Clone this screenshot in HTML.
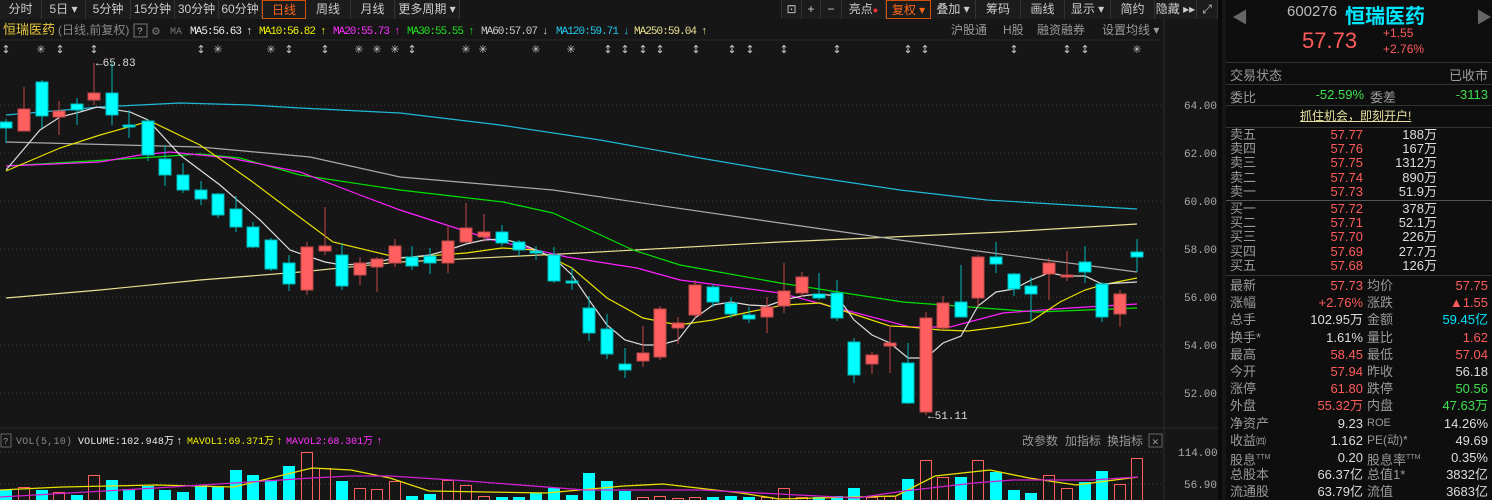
<!DOCTYPE html>
<html><head><meta charset="utf-8"><style>
*{margin:0;padding:0;box-sizing:border-box}
body{width:1492px;height:500px;background:#161616;overflow:hidden;position:relative;font-family:"Liberation Sans","Noto Sans CJK SC",sans-serif;font-size:12px;color:#bbb}
.a{position:absolute;white-space:nowrap}
.tab{position:absolute;top:0;height:19px;line-height:18px;text-align:center;color:#ccc;border-right:1px solid #333;background:#1c1c1c;font-size:12px}
.rp{position:absolute;left:1226px;top:0;width:266px;height:500px;background:#0e0e0e}
.r{position:absolute;font-size:13px;white-space:nowrap}
.red{color:#ff5b5b}.grn{color:#3fe04f}.cy{color:#00e5ff}.wh{color:#ddd}.gy{color:#9a9a9a}
</style></head><body>
<!-- top tabs -->
<div class="tab" style="left:0;width:42px">分时</div>
<div class="tab" style="left:42px;width:44px">5日 ▾</div>
<div class="tab" style="left:86px;width:45px">5分钟</div>
<div class="tab" style="left:131px;width:44px">15分钟</div>
<div class="tab" style="left:175px;width:44px">30分钟</div>
<div class="tab" style="left:219px;width:43px">60分钟</div>
<div class="tab" style="left:262px;width:44px;color:#ff6a1a;border:1px solid #d05010">日线</div>
<div class="tab" style="left:306px;width:45px">周线</div>
<div class="tab" style="left:351px;width:44px">月线</div>
<div class="tab" style="left:395px;width:65px">更多周期 ▾</div>
<div class="tab" style="left:781px;width:21px;border-left:1px solid #333">⊡</div>
<div class="tab" style="left:802px;width:19px">+</div>
<div class="tab" style="left:821px;width:21px">−</div>
<div class="tab" style="left:842px;width:44px">亮点<span style="color:#f33;font-size:9px">●</span></div>
<div class="tab" style="left:886px;width:45px;color:#ff6a1a;border:1px solid #d05010">复权 ▾</div>
<div class="tab" style="left:931px;width:45px">叠加 ▾</div>
<div class="tab" style="left:976px;width:45px">筹码</div>
<div class="tab" style="left:1021px;width:44px">画线</div>
<div class="tab" style="left:1065px;width:46px">显示 ▾</div>
<div class="tab" style="left:1111px;width:44px">简约</div>
<div class="tab" style="left:1155px;width:42px">隐藏 ▸▸</div>
<div class="tab" style="left:1197px;width:21px">⤢</div>

<svg class="a" style="left:0;top:0" width="1222" height="500" font-family="Liberation Mono, monospace">
<line x1="1164" y1="19" x2="1164" y2="500" stroke="#2c2c2c"/>
<line x1="0" y1="428" x2="1218" y2="428" stroke="#2c2c2c"/>
<rect x="1218" y="0" width="8" height="500" fill="#0a0a0a"/>
<!-- title row -->
<text x="3" y="34" fill="#e8c840" font-size="13" font-family="Liberation Sans, Noto Sans CJK SC, sans-serif">恒瑞医药</text>
<text x="58" y="34" fill="#888" font-size="12" font-family="Liberation Sans, Noto Sans CJK SC, sans-serif">(日线,前复权)</text>
<rect x="134" y="24" width="13" height="13" fill="none" stroke="#777"/><text x="137" y="34" fill="#aaa" font-size="10">?</text>
<text x="152" y="35" fill="#777" font-size="13">⚙</text>
<text x="170" y="34" fill="#777" font-size="10">MA</text>
<text x="190" y="34" fill="#eee" font-size="11" textLength="52">MA5:56.63</text><text x="246" y="34" fill="#eee" font-size="11">↑</text>
<text x="259" y="34" fill="#f0f000" font-size="11" textLength="57">MA10:56.82</text><text x="320" y="34" fill="#f0f000" font-size="11">↑</text>
<text x="333" y="34" fill="#ff30ff" font-size="11" textLength="57">MA20:55.73</text><text x="394" y="34" fill="#ff30ff" font-size="11">↑</text>
<text x="407" y="34" fill="#20e020" font-size="11" textLength="57">MA30:55.55</text><text x="468" y="34" fill="#20e020" font-size="11">↑</text>
<text x="481" y="34" fill="#ccc" font-size="11" textLength="57">MA60:57.07</text><text x="542" y="34" fill="#ccc" font-size="11">↓</text>
<text x="556" y="34" fill="#20c8f0" font-size="11" textLength="63">MA120:59.71</text><text x="623" y="34" fill="#20c8f0" font-size="11">↓</text>
<text x="634" y="34" fill="#e8e090" font-size="11" textLength="63">MA250:59.04</text><text x="701" y="34" fill="#e8e090" font-size="11">↑</text>
<g fill="#999" font-size="12" font-family="Liberation Sans, Noto Sans CJK SC, sans-serif">
<text x="951" y="34">沪股通</text><text x="1003" y="34">H股</text><text x="1037" y="34">融资融券</text><text x="1102" y="34">设置均线 ▾</text></g>
<line x1="0" y1="40" x2="1164" y2="40" stroke="#262626"/>
<!-- markers -->
<g fill="#ccc" font-size="11" font-family="DejaVu Sans, sans-serif" text-anchor="middle">
<text x="6" y="53">↕</text><text x="60" y="53">↕</text><text x="94" y="53">↕</text><text x="201" y="53">↕</text><text x="289" y="53">↕</text><text x="325" y="53">↕</text><text x="412" y="53">↕</text><text x="608" y="53">↕</text><text x="625" y="53">↕</text><text x="643" y="53">↕</text><text x="660" y="53">↕</text><text x="696" y="53">↕</text><text x="732" y="53">↕</text><text x="750" y="53">↕</text><text x="784" y="53">↕</text><text x="837" y="53">↕</text><text x="908" y="53">↕</text><text x="925" y="53">↕</text><text x="1014" y="53">↕</text><text x="1067" y="53">↕</text><text x="1085" y="53">↕</text>
<text x="41" y="53">✳</text><text x="218" y="53">✳</text><text x="271" y="53">✳</text><text x="359" y="53">✳</text><text x="377" y="53">✳</text><text x="395" y="53">✳</text><text x="466" y="53">✳</text><text x="483" y="53">✳</text><text x="536" y="53">✳</text><text x="571" y="53">✳</text><text x="1137" y="53">✳</text>
</g>
<!-- grid -->
<g stroke="#3a3a3a" stroke-dasharray="1,3">
<line x1="0" y1="105" x2="1164" y2="105"/><line x1="0" y1="153" x2="1164" y2="153"/><line x1="0" y1="201" x2="1164" y2="201"/><line x1="0" y1="249" x2="1164" y2="249"/><line x1="0" y1="297" x2="1164" y2="297"/><line x1="0" y1="345" x2="1164" y2="345"/><line x1="0" y1="393" x2="1164" y2="393"/>
<line x1="0" y1="452" x2="1164" y2="452"/><line x1="0" y1="484" x2="1164" y2="484"/></g>
<g fill="#aaa" font-size="11">
<text x="1184" y="109">64.00</text><text x="1184" y="157">62.00</text><text x="1184" y="205">60.00</text><text x="1184" y="253">58.00</text><text x="1184" y="301">56.00</text><text x="1184" y="349">54.00</text><text x="1184" y="397">52.00</text>
<text x="1178" y="456">114.00</text><text x="1184" y="488">56.90</text></g>
<!-- MA lines -->
<g fill="none" stroke-width="1.2">
<polyline stroke="#e8e090" points="6,298 100,290 200,280 300,272 400,262 580,253 780,242 870,238 1003,232 1137,224"/>
<polyline stroke="#20b8d8" points="6,115 100,107 180,103 250,105 300,108 400,113 500,125 600,140 700,158 800,175 900,190 987,200 1137,209"/>
<polyline stroke="#aaa" points="6,142 200,147 310,157 400,177 553,190 780,223 970,250 1137,272"/>
<polyline stroke="#00e000" points="6,166 140,158 200,154 240,158 300,175 400,190 503,202 553,213 633,250 680,265 780,283 903,302 970,307 1037,312 1137,308"/>
<polyline stroke="#ff20ff" points="6,166 100,162 140,155 170,152 230,158 300,172 360,195 400,210 493,240 567,257 637,268 680,280 780,293 910,327 950,327 1003,313 1070,308 1137,304"/>
<polyline stroke="#e8e000" points="6,171 60,148 100,135 150,121 200,145 250,180 290,210 333,242 400,258 466,253 502,248 536,250 572,268 607,298 643,318 678,325 713,320 749,312 784,305 820,303 850,313 890,326 910,327 940,330 968,331 1000,327 1030,322 1060,302 1085,290 1102,285 1137,278"/>
<polyline stroke="#ddd" points="6,170 40,130 60,117 80,112 97,107 130,112 148,120 180,155 220,185 260,220 290,250 307,256 325,262 342,265 360,264 378,262 395,258 412,257 430,255 448,250 466,244 484,240 502,239 519,243 536,250 554,258 572,275 589,300 607,325 625,340 643,345 660,345 678,340 695,318 713,305 731,302 749,305 767,306 784,300 802,296 819,294 837,296 854,320 872,335 890,343 908,358 926,358 943,343 961,336 978,306 996,292 1014,289 1031,280 1049,273 1067,276 1085,276 1102,284 1120,283 1137,282"/>
</g>
<!-- candles -->
<g id="c">
<g stroke="#00b8b8" fill="#00ffff">
<line x1="6" y1="119" x2="6" y2="143"/><rect x="0" y="122" width="12" height="6"/>
<line x1="42" y1="80" x2="42" y2="128"/><rect x="36" y="82" width="12" height="34"/>
<line x1="77" y1="98" x2="77" y2="125"/><rect x="71" y="104" width="12" height="6"/>
<line x1="112" y1="63" x2="112" y2="125"/><rect x="106" y="93" width="12" height="22"/>
<line x1="129" y1="110" x2="129" y2="138"/><rect x="123" y="125" width="12" height="2"/>
<line x1="148" y1="119" x2="148" y2="161"/><rect x="142" y="121" width="12" height="34"/>
<line x1="165" y1="145" x2="165" y2="186"/><rect x="159" y="159" width="12" height="16"/>
<line x1="183" y1="163" x2="183" y2="193"/><rect x="177" y="175" width="12" height="15"/>
<line x1="201" y1="181" x2="201" y2="205"/><rect x="195" y="190" width="12" height="9"/>
<line x1="218" y1="193" x2="218" y2="218"/><rect x="212" y="194" width="12" height="21"/>
<line x1="236" y1="196" x2="236" y2="232"/><rect x="230" y="209" width="12" height="18"/>
<line x1="253" y1="222" x2="253" y2="248"/><rect x="247" y="227" width="12" height="20"/>
<line x1="271" y1="238" x2="271" y2="271"/><rect x="265" y="240" width="12" height="29"/>
<line x1="289" y1="255" x2="289" y2="291"/><rect x="283" y="263" width="12" height="21"/>
<line x1="342" y1="243" x2="342" y2="290"/><rect x="336" y="255" width="12" height="31"/>
<line x1="412" y1="246" x2="412" y2="270"/><rect x="406" y="257" width="12" height="9"/>
<line x1="430" y1="248" x2="430" y2="274"/><rect x="424" y="256" width="12" height="7"/>
<line x1="502" y1="225" x2="502" y2="246"/><rect x="496" y="232" width="12" height="11"/>
<line x1="519" y1="240" x2="519" y2="256"/><rect x="513" y="242" width="12" height="8"/>
<line x1="536" y1="246" x2="536" y2="260"/><rect x="530" y="251" width="12" height="2"/>
<line x1="554" y1="247" x2="554" y2="283"/><rect x="548" y="255" width="12" height="26"/>
<line x1="572" y1="268" x2="572" y2="290"/><rect x="566" y="281" width="12" height="2"/>
<line x1="589" y1="296" x2="589" y2="341"/><rect x="583" y="308" width="12" height="25"/>
<line x1="607" y1="314" x2="607" y2="359"/><rect x="601" y="329" width="12" height="25"/>
<line x1="625" y1="348" x2="625" y2="378"/><rect x="619" y="364" width="12" height="6"/>
<line x1="713" y1="284" x2="713" y2="307"/><rect x="707" y="287" width="12" height="15"/>
<line x1="731" y1="297" x2="731" y2="318"/><rect x="725" y="303" width="12" height="11"/>
<line x1="749" y1="307" x2="749" y2="323"/><rect x="743" y="315" width="12" height="4"/>
<line x1="819" y1="273" x2="819" y2="300"/><rect x="813" y="294" width="12" height="4"/>
<line x1="837" y1="280" x2="837" y2="321"/><rect x="831" y="293" width="12" height="25"/>
<line x1="854" y1="338" x2="854" y2="383"/><rect x="848" y="342" width="12" height="33"/>
<line x1="908" y1="343" x2="908" y2="404"/><rect x="902" y="363" width="12" height="40"/>
<line x1="961" y1="265" x2="961" y2="317"/><rect x="955" y="302" width="12" height="15"/>
<line x1="996" y1="242" x2="996" y2="273"/><rect x="990" y="257" width="12" height="7"/>
<line x1="1014" y1="273" x2="1014" y2="296"/><rect x="1008" y="274" width="12" height="15"/>
<line x1="1031" y1="277" x2="1031" y2="322"/><rect x="1025" y="286" width="12" height="8"/>
<line x1="1085" y1="246" x2="1085" y2="283"/><rect x="1079" y="262" width="12" height="10"/>
<line x1="1102" y1="282" x2="1102" y2="322"/><rect x="1096" y="284" width="12" height="33"/>
<line x1="1137" y1="239" x2="1137" y2="272"/><rect x="1131" y="252" width="12" height="5"/>
</g>
<g stroke="#c04848" fill="#ff5f5f">
<line x1="24" y1="87" x2="24" y2="131"/><rect x="18" y="109" width="12" height="22"/>
<line x1="59" y1="101" x2="59" y2="135"/><rect x="53" y="111" width="12" height="6"/>
<line x1="94" y1="63" x2="94" y2="105"/><rect x="88" y="93" width="12" height="7"/>
<line x1="307" y1="242" x2="307" y2="295"/><rect x="301" y="247" width="12" height="43"/>
<line x1="325" y1="207" x2="325" y2="255"/><rect x="319" y="246" width="12" height="5"/>
<line x1="360" y1="257" x2="360" y2="285"/><rect x="354" y="263" width="12" height="12"/>
<line x1="377" y1="257" x2="377" y2="292"/><rect x="371" y="259" width="12" height="8"/>
<line x1="395" y1="239" x2="395" y2="267"/><rect x="389" y="246" width="12" height="17"/>
<line x1="448" y1="225" x2="448" y2="273"/><rect x="442" y="241" width="12" height="22"/>
<line x1="466" y1="203" x2="466" y2="243"/><rect x="460" y="228" width="12" height="14"/>
<line x1="484" y1="214" x2="484" y2="242"/><rect x="478" y="232" width="12" height="5"/>
<line x1="643" y1="326" x2="643" y2="367"/><rect x="637" y="353" width="12" height="8"/>
<line x1="660" y1="306" x2="660" y2="360"/><rect x="654" y="309" width="12" height="48"/>
<line x1="678" y1="317" x2="678" y2="344"/><rect x="672" y="323" width="12" height="5"/>
<line x1="695" y1="280" x2="695" y2="318"/><rect x="689" y="285" width="12" height="30"/>
<line x1="767" y1="297" x2="767" y2="333"/><rect x="761" y="307" width="12" height="10"/>
<line x1="784" y1="263" x2="784" y2="313"/><rect x="778" y="291" width="12" height="15"/>
<line x1="802" y1="272" x2="802" y2="297"/><rect x="796" y="277" width="12" height="16"/>
<line x1="872" y1="352" x2="872" y2="374"/><rect x="866" y="355" width="12" height="9"/>
<line x1="890" y1="325" x2="890" y2="373"/><rect x="884" y="343" width="12" height="3"/>
<line x1="926" y1="312" x2="926" y2="415"/><rect x="920" y="318" width="12" height="94"/>
<line x1="943" y1="296" x2="943" y2="330"/><rect x="937" y="303" width="12" height="25"/>
<line x1="978" y1="255" x2="978" y2="307"/><rect x="972" y="257" width="12" height="41"/>
<line x1="1049" y1="258" x2="1049" y2="300"/><rect x="1043" y="263" width="12" height="11"/>
<line x1="1067" y1="251" x2="1067" y2="281"/><rect x="1061" y="275" width="12" height="2"/>
<line x1="1120" y1="290" x2="1120" y2="327"/><rect x="1114" y="294" width="12" height="20"/>
</g></g>
<g fill="#ddd" font-size="11"><text x="96" y="66">←65.83</text><text x="928" y="419">←51.11</text></g>
<!-- volume title -->
<rect x="1" y="434" width="10" height="13" fill="none" stroke="#666"/><text x="3" y="444" fill="#999" font-size="9">?</text>
<text x="16" y="444" fill="#888" font-size="10" textLength="56">VOL(5,10)</text>
<text x="78" y="444" fill="#eee" font-size="10" textLength="96">VOLUME:102.948万</text><text x="176" y="444" fill="#eee" font-size="11">↑</text>
<text x="187" y="444" fill="#f0f000" font-size="10" textLength="87">MAVOL1:69.371万</text><text x="276" y="444" fill="#f0f000" font-size="11">↑</text>
<text x="286" y="444" fill="#ff30ff" font-size="10" textLength="87">MAVOL2:68.301万</text><text x="376" y="444" fill="#ff30ff" font-size="11">↑</text>
<g fill="#999" font-size="12" font-family="Liberation Sans, Noto Sans CJK SC, sans-serif"><text x="1022" y="445">改参数</text><text x="1065" y="445">加指标</text><text x="1107" y="445">换指标</text></g>
<rect x="1149" y="434" width="13" height="13" fill="none" stroke="#666"/><text x="1152" y="445" fill="#999" font-size="11">✕</text>
<!-- volume bars -->
<g fill="#00ffff">
<rect x="0" y="490" width="12" height="10"/><rect x="36" y="490" width="12" height="10"/><rect x="71" y="495" width="12" height="5"/><rect x="106" y="480" width="12" height="20"/><rect x="123" y="489" width="12" height="11"/><rect x="142" y="486" width="12" height="14"/><rect x="159" y="490" width="12" height="10"/><rect x="177" y="492" width="12" height="8"/><rect x="195" y="485" width="12" height="15"/><rect x="212" y="486" width="12" height="14"/><rect x="230" y="470" width="12" height="30"/><rect x="247" y="475" width="12" height="25"/><rect x="265" y="480" width="12" height="20"/><rect x="283" y="466" width="12" height="34"/><rect x="336" y="481" width="12" height="19"/><rect x="406" y="496" width="12" height="4"/><rect x="424" y="494" width="12" height="6"/><rect x="496" y="497" width="12" height="3"/><rect x="513" y="497" width="12" height="3"/><rect x="530" y="493" width="12" height="7"/><rect x="548" y="488" width="12" height="12"/><rect x="566" y="495" width="12" height="5"/><rect x="583" y="473" width="12" height="27"/><rect x="601" y="481" width="12" height="19"/><rect x="619" y="491" width="12" height="9"/><rect x="707" y="497" width="12" height="3"/><rect x="725" y="496" width="12" height="4"/><rect x="743" y="497" width="12" height="3"/><rect x="813" y="497" width="12" height="3"/><rect x="831" y="496" width="12" height="4"/><rect x="848" y="488" width="12" height="12"/><rect x="902" y="479" width="12" height="21"/><rect x="955" y="477" width="12" height="23"/><rect x="990" y="472" width="12" height="28"/><rect x="1008" y="490" width="12" height="10"/><rect x="1025" y="493" width="12" height="7"/><rect x="1079" y="482" width="12" height="18"/><rect x="1096" y="471" width="12" height="29"/><rect x="1131" y="458" width="0" height="0"/>
</g>
<g fill="none" stroke="#ff5f5f">
<rect x="18.5" y="487.5" width="11" height="13"/><rect x="53.5" y="492.5" width="11" height="8"/><rect x="88.5" y="475.5" width="11" height="25"/><rect x="301.5" y="452.5" width="11" height="48"/><rect x="319.5" y="468.5" width="11" height="32"/><rect x="354.5" y="488.5" width="11" height="12"/><rect x="371.5" y="489.5" width="11" height="11"/><rect x="389.5" y="481.5" width="11" height="19"/><rect x="442.5" y="480.5" width="11" height="20"/><rect x="460.5" y="485.5" width="11" height="15"/><rect x="478.5" y="496.5" width="11" height="4"/><rect x="637.5" y="497.5" width="11" height="3"/><rect x="654.5" y="496.5" width="11" height="4"/><rect x="672.5" y="498.5" width="11" height="2"/><rect x="689.5" y="497.5" width="11" height="3"/><rect x="761.5" y="497.5" width="11" height="3"/><rect x="778.5" y="488.5" width="11" height="12"/><rect x="796.5" y="497.5" width="11" height="3"/><rect x="866.5" y="497.5" width="11" height="3"/><rect x="884.5" y="496.5" width="11" height="4"/><rect x="920.5" y="460.5" width="11" height="40"/><rect x="937.5" y="477.5" width="11" height="23"/><rect x="972.5" y="460.5" width="11" height="40"/><rect x="1043.5" y="475.5" width="11" height="25"/><rect x="1061.5" y="488.5" width="11" height="12"/><rect x="1114.5" y="484.5" width="11" height="16"/><rect x="1131.5" y="458.5" width="11" height="42"/>
</g>
<g fill="none" stroke-width="1.3">
<polyline stroke="#e8e000" points="0,490 62,487 156,485 234,487 312,468 351,470 390,478 429,491 546,493 624,486 663,484 741,493 779,499 896,496 935,476 990,470 1029,478 1076,485 1138,477"/>
<polyline stroke="#d020d0" points="0,497 156,488 312,478 351,476 390,476 468,481 585,490 701,490 779,494 857,498 904,491 974,483 1013,480 1091,480 1138,477"/>
</g>
</svg>

<!-- right panel -->
<div class="rp">
<div class="a" style="left:6px;top:4px;color:#666;font-size:16px">◀</div>
<div class="a" style="left:250px;top:4px;color:#666;font-size:16px">▶</div>
<div class="a" style="left:61px;top:3px;color:#bbb;font-size:15px">600276</div>
<div class="a" style="left:119px;top:0px;color:#00e8ff;font-size:20px;font-weight:bold">恒瑞医药</div>
<div class="a red" style="left:76px;top:28px;font-size:22px">57.73</div>
<div class="a red" style="left:157px;top:26px;font-size:12px">+1.55</div>
<div class="a red" style="left:157px;top:42px;font-size:12px">+2.76%</div>
<div class="a" style="left:0;top:62px;width:266px;border-top:1px solid #333"></div>
<div class="r gy" style="left:4px;top:65px">交易状态</div><div class="r gy" style="right:4px;top:65px">已收市</div>
<div class="a" style="left:0;top:84px;width:266px;border-top:1px solid #333"></div>
<div class="r gy" style="left:4px;top:87px">委比</div><div class="r grn" style="right:128px;top:87px">-52.59%</div><div class="r gy" style="left:144px;top:87px">委差</div><div class="r grn" style="right:4px;top:87px">-3113</div>
<div class="a" style="left:0;top:105px;width:266px;border-top:1px solid #333"></div>
<div class="r" style="left:74px;top:107px;color:#e6e0a0;text-decoration:underline;font-size:12px">抓住机会，即刻开户!</div>
<div class="a" style="left:0;top:127px;width:266px;border-top:1px solid #333"></div>
<div style="position:absolute;left:0;top:128px;width:266px;line-height:14.2px;font-size:13px">
<div style="position:relative;height:14.2px"><span class="gy" style="position:absolute;left:4px">卖五</span><span class="red" style="position:absolute;right:129px">57.77</span><span class="wh" style="position:absolute;right:55px">188万</span></div>
<div style="position:relative;height:14.2px"><span class="gy" style="position:absolute;left:4px">卖四</span><span class="red" style="position:absolute;right:129px">57.76</span><span class="wh" style="position:absolute;right:55px">167万</span></div>
<div style="position:relative;height:14.2px"><span class="gy" style="position:absolute;left:4px">卖三</span><span class="red" style="position:absolute;right:129px">57.75</span><span class="wh" style="position:absolute;right:55px">1312万</span></div>
<div style="position:relative;height:14.2px"><span class="gy" style="position:absolute;left:4px">卖二</span><span class="red" style="position:absolute;right:129px">57.74</span><span class="wh" style="position:absolute;right:55px">890万</span></div>
<div style="position:relative;height:14.2px"><span class="gy" style="position:absolute;left:4px">卖一</span><span class="red" style="position:absolute;right:129px">57.73</span><span class="wh" style="position:absolute;right:55px">51.9万</span></div>
<div style="height:2px;border-top:1px solid #555;margin:1px 0 0"></div>
<div style="position:relative;height:14.2px"><span class="gy" style="position:absolute;left:4px">买一</span><span class="red" style="position:absolute;right:129px">57.72</span><span class="wh" style="position:absolute;right:55px">378万</span></div>
<div style="position:relative;height:14.2px"><span class="gy" style="position:absolute;left:4px">买二</span><span class="red" style="position:absolute;right:129px">57.71</span><span class="wh" style="position:absolute;right:55px">52.1万</span></div>
<div style="position:relative;height:14.2px"><span class="gy" style="position:absolute;left:4px">买三</span><span class="red" style="position:absolute;right:129px">57.70</span><span class="wh" style="position:absolute;right:55px">226万</span></div>
<div style="position:relative;height:14.2px"><span class="gy" style="position:absolute;left:4px">买四</span><span class="red" style="position:absolute;right:129px">57.69</span><span class="wh" style="position:absolute;right:55px">27.7万</span></div>
<div style="position:relative;height:14.2px"><span class="gy" style="position:absolute;left:4px">买五</span><span class="red" style="position:absolute;right:129px">57.68</span><span class="wh" style="position:absolute;right:55px">126万</span></div>
</div>
<div class="a" style="left:0;top:275px;width:266px;border-top:1px solid #333"></div>
<div style="position:absolute;left:0;top:277px;width:266px;line-height:17.2px;font-size:13px">
<div style="position:relative;height:17.2px"><span class="gy" style="position:absolute;left:4px">最新</span><span class="red" style="position:absolute;right:129px">57.73</span><span class="gy" style="position:absolute;left:141px">均价</span><span class="red" style="position:absolute;right:4px">57.75</span></div>
<div style="position:relative;height:17.2px"><span class="gy" style="position:absolute;left:4px">涨幅</span><span class="red" style="position:absolute;right:129px">+2.76%</span><span class="gy" style="position:absolute;left:141px">涨跌</span><span class="red" style="position:absolute;right:4px">▲1.55</span></div>
<div style="position:relative;height:17.2px"><span class="gy" style="position:absolute;left:4px">总手</span><span class="wh" style="position:absolute;right:129px">102.95万</span><span class="gy" style="position:absolute;left:141px">金额</span><span class="cy" style="position:absolute;right:4px">59.45亿</span></div>
<div style="position:relative;height:17.2px"><span class="gy" style="position:absolute;left:4px">换手*</span><span class="wh" style="position:absolute;right:129px">1.61%</span><span class="gy" style="position:absolute;left:141px">量比</span><span class="red" style="position:absolute;right:4px">1.62</span></div>
<div style="position:relative;height:17.2px"><span class="gy" style="position:absolute;left:4px">最高</span><span class="red" style="position:absolute;right:129px">58.45</span><span class="gy" style="position:absolute;left:141px">最低</span><span class="red" style="position:absolute;right:4px">57.04</span></div>
<div style="position:relative;height:17.2px"><span class="gy" style="position:absolute;left:4px">今开</span><span class="red" style="position:absolute;right:129px">57.94</span><span class="gy" style="position:absolute;left:141px">昨收</span><span class="wh" style="position:absolute;right:4px">56.18</span></div>
<div style="position:relative;height:17.2px"><span class="gy" style="position:absolute;left:4px">涨停</span><span class="red" style="position:absolute;right:129px">61.80</span><span class="gy" style="position:absolute;left:141px">跌停</span><span class="grn" style="position:absolute;right:4px">50.56</span></div>
<div style="position:relative;height:17.2px"><span class="gy" style="position:absolute;left:4px">外盘</span><span class="red" style="position:absolute;right:129px">55.32万</span><span class="gy" style="position:absolute;left:141px">内盘</span><span class="grn" style="position:absolute;right:4px">47.63万</span></div>
<div style="position:relative;height:17.2px"><span class="gy" style="position:absolute;left:4px">净资产</span><span class="wh" style="position:absolute;right:129px">9.23</span><span class="gy" style="position:absolute;left:141px;font-size:11px">ROE</span><span class="wh" style="position:absolute;right:4px">14.26%</span></div>
<div style="position:relative;height:17.2px"><span class="gy" style="position:absolute;left:4px">收益<span style="font-size:10px">㈣</span></span><span class="wh" style="position:absolute;right:129px">1.162</span><span class="gy" style="position:absolute;left:141px;font-size:12px">PE(动)*</span><span class="wh" style="position:absolute;right:4px">49.69</span></div>
<div style="position:relative;height:17.2px"><span class="gy" style="position:absolute;left:4px">股息<sup style="font-size:7px">TTM</sup></span><span class="wh" style="position:absolute;right:129px">0.20</span><span class="gy" style="position:absolute;left:141px">股息率<sup style="font-size:7px">TTM</sup></span><span class="wh" style="position:absolute;right:4px">0.35%</span></div>
<div style="position:relative;height:17.2px"><span class="gy" style="position:absolute;left:4px">总股本</span><span class="wh" style="position:absolute;right:129px">66.37亿</span><span class="gy" style="position:absolute;left:141px">总值1*</span><span class="wh" style="position:absolute;right:4px">3832亿</span></div>
<div style="position:relative;height:17.2px"><span class="gy" style="position:absolute;left:4px">流通股</span><span class="wh" style="position:absolute;right:129px">63.79亿</span><span class="gy" style="position:absolute;left:141px">流值</span><span class="wh" style="position:absolute;right:4px">3683亿</span></div>
</div>
</div>
</body></html>
